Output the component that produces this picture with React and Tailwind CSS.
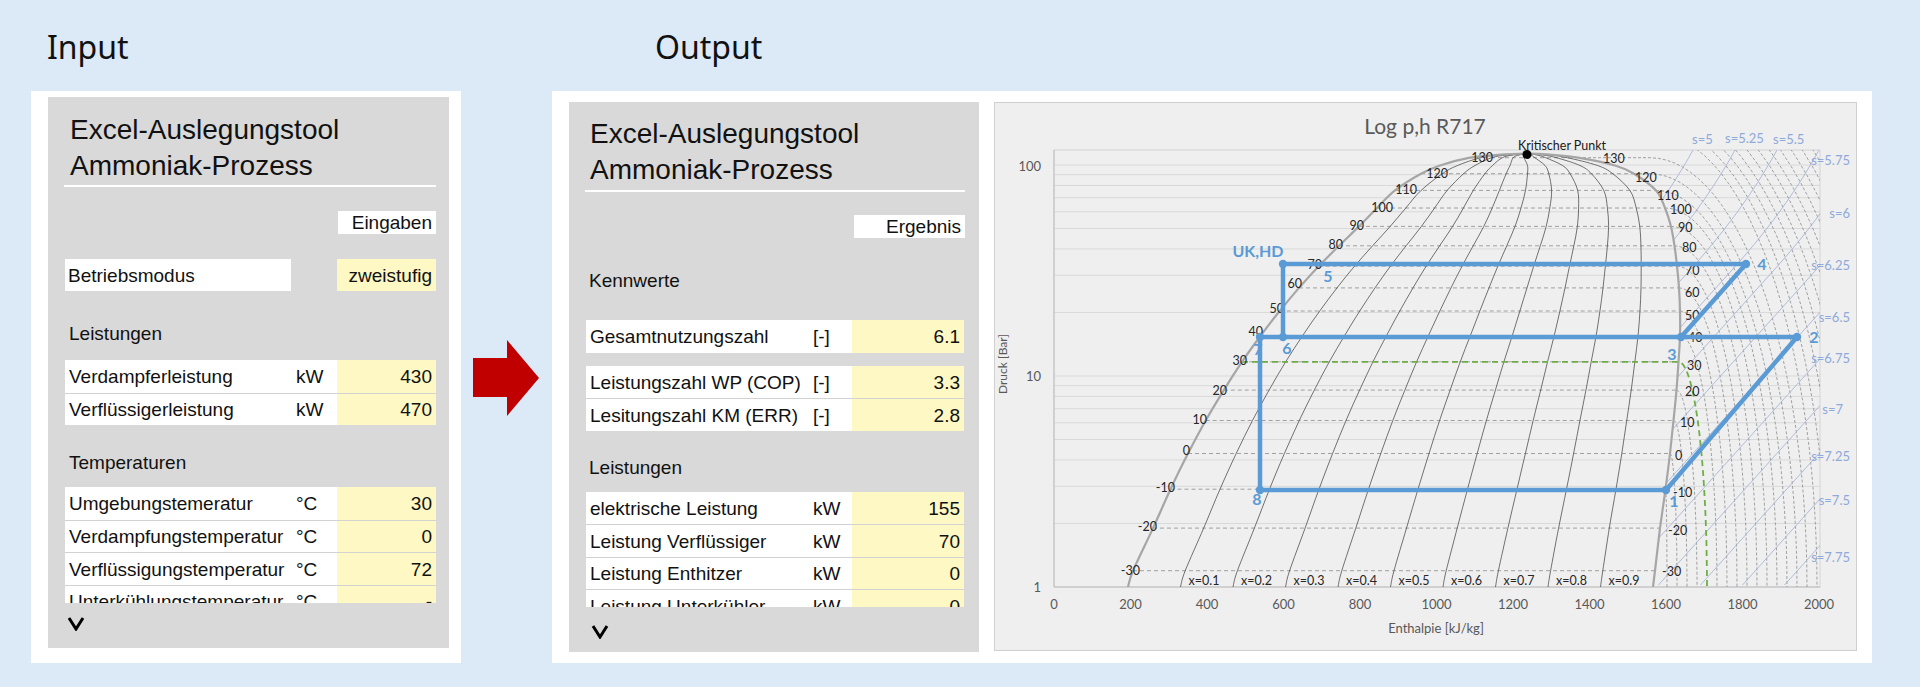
import React from 'react';
import clsx from 'clsx';

// saturation line of R717, already placed in page pixels (y from pressure, x from enthalpy)
const SAT = [
    { T: -33.6, y: 587, xl: 1128, xv: 1653 },
    { T: -30, y: 570.7, xl: 1133, xv: 1655 },
    { T: -20, y: 528.1, xl: 1153, xv: 1660 },
    { T: -10, y: 489.2, xl: 1170.5, xv: 1665.5 },
    { T: 0, y: 453.5, xl: 1188, xv: 1670 },
    { T: 10, y: 420.5, xl: 1205.7, xv: 1673.5 },
    { T: 20, y: 390.1, xl: 1223.8, xv: 1676.5 },
    { T: 30, y: 361.8, xl: 1242, xv: 1678.5 },
    { T: 40, y: 335.5, xl: 1260.8, xv: 1680 },
    { T: 50, y: 311, xl: 1279.7, xv: 1680 },
    { T: 60, y: 287.9, xl: 1299, xv: 1679 },
    { T: 70, y: 266.2, xl: 1318.7, xv: 1677 },
    { T: 80, y: 245.8, xl: 1339, xv: 1674.5 },
    { T: 90, y: 226.4, xl: 1359, xv: 1671 },
    { T: 100, y: 208, xl: 1377, xv: 1665 },
    { T: 110, y: 190.4, xl: 1395, xv: 1656 },
    { T: 120, y: 173.7, xl: 1421, xv: 1634 },
    { T: 125, y: 165.5, xl: 1440, xv: 1615 },
    { T: 130, y: 157.7, xl: 1470, xv: 1578 },
    { T: 131.5, y: 155, xl: 1495, xv: 1555 },
    { T: 132.25, y: 153.6, xl: 1527, xv: 1527 },
];

const LIQ_LABELS = [
    ['-30', 1140, 570], ['-20', 1157, 526], ['-10', 1175, 487], ['0', 1190, 450],
    ['10', 1207, 419], ['20', 1227, 390], ['30', 1247, 360], ['40', 1263, 331],
    ['50', 1284, 308], ['60', 1302, 283], ['70', 1322, 264], ['80', 1343, 244],
    ['90', 1364, 225], ['100', 1393, 207], ['110', 1417, 189], ['120', 1448, 173],
    ['130', 1493, 157],
];

const VAP_LABELS = [
    ['130', 1603, 158], ['120', 1635, 177], ['110', 1657, 195], ['100', 1670, 209],
    ['90', 1678, 227], ['80', 1682, 247], ['70', 1685, 270], ['60', 1685, 292],
    ['50', 1685, 315], ['40', 1688, 337], ['30', 1687, 365], ['20', 1685, 391],
    ['10', 1680, 422], ['0', 1675, 455], ['-10', 1673, 492], ['-20', 1668, 530],
    ['-30', 1662, 571],
];

const S_LABELS = [
    ['s=5', 1692, 139, 'start'], ['s=5.25', 1725, 138, 'start'], ['s=5.5', 1773, 139, 'start'],
    ['s=5.75', 1850, 160, 'end'], ['s=6', 1850, 213, 'end'], ['s=6.25', 1850, 265, 'end'],
    ['s=6.5', 1850, 317, 'end'], ['s=6.75', 1850, 358, 'end'], ['s=7', 1843, 409, 'end'],
    ['s=7.25', 1850, 456, 'end'], ['s=7.5', 1850, 500, 'end'], ['s=7.75', 1850, 557, 'end'],
];

const GRID = [2, 3, 4, 5, 6, 7, 8, 9, 10, 20, 30, 40, 50, 60, 70, 80, 90, 100];
const yOf = (p) => 587 - 211 * Math.log10(p);

function smooth(pts) {
    let d = `M${pts[0][0]},${pts[0][1]}`;
    for (let i = 0; i < pts.length - 1; i++) {
        const p0 = pts[i - 1] || pts[i];
        const p1 = pts[i];
        const p2 = pts[i + 1];
        const p3 = pts[i + 2] || p2;
        const c1x = p1[0] + (p2[0] - p0[0]) / 6;
        const c1y = p1[1] + (p2[1] - p0[1]) / 6;
        const c2x = p2[0] - (p3[0] - p1[0]) / 6;
        const c2y = p2[1] - (p3[1] - p1[1]) / 6;
        d += ` C${c1x.toFixed(1)},${c1y.toFixed(1)} ${c2x.toFixed(1)},${c2y.toFixed(1)} ${p2[0]},${p2[1]}`;
    }
    return d;
}

const line = (pts) => pts.map((p, i) => `${i ? 'L' : 'M'}${p[0].toFixed(1)},${p[1].toFixed(1)}`).join(' ');

const xBottom = (T) => 1707 + (T - 30);

// superheated isotherm as a quarter ellipse ending vertical at the bottom axis
function isotherm(xStart, yTop, cx, a, b) {
    const pts = [];
    if (xStart < cx) pts.push([xStart, yTop]);
    for (let i = 0; i <= 30; i++) {
        const t = (i / 30) * (Math.PI / 2);
        pts.push([cx + a * Math.sin(t), 587 - b * Math.cos(t)]);
    }
    return line(pts);
}

function isentropeX(k, y) {
    const d = y - 150;
    const f = d <= 120 ? -(0.55 * d + (0.35 * d * d) / 240) : -(87 + 0.9 * (d - 120));
    return 1693 + 42 * k + f;
}

function Chart() {
    const dome = smooth([...SAT.map((s) => [s.xl, s.y]), ...SAT.slice(0, -1).reverse().map((s) => [s.xv, s.y])]);
    const qualities = [0.1, 0.2, 0.3, 0.4, 0.5, 0.6, 0.7, 0.8, 0.9];
    const decade = SAT.filter((s) => Number.isInteger(s.T) && s.T % 10 === 0);
    const superRegion = `${line(SAT.map((s) => [s.xv, s.y]))} L1527,150 L1820,150 L1820,587 Z`;
    const font = "Lato, 'Liberation Sans', sans-serif";

    const arcs = [];
    decade.forEach((s) => {
        if (s.T === 30) return;
        const cx = Math.max(s.xv, 1650);
        const a = xBottom(s.T) - cx;
        if (a < 1) return;
        arcs.push(isotherm(s.xv, s.y, cx, a, 587 - s.y));
    });
    for (let T = 140; T <= 260; T += 10) {
        arcs.push(isotherm(1655, 0, 1655, xBottom(T) - 1655, 453 + (T - 140) * 0.95));
    }

    const isentropes = [];
    for (let k = 0; k <= 11; k++) {
        const pts = [];
        for (let y = 150; y <= 587; y += 5) pts.push([isentropeX(k, y), y]);
        isentropes.push(line(pts));
    }

    const green = `M1242,361.8 L1678.5,361.8 ${isotherm(1678.5, 361.8, 1678.5, 28.5, 225.2).replace('M', 'L')}`;

    return (
        <svg width="861" height="547" viewBox="995 103 861 547" className="block">
            <defs>
                <clipPath id="plot">
                    <rect x="1054" y="150" width="766" height="437" />
                </clipPath>
                <clipPath id="superheat">
                    <path d={superRegion} />
                </clipPath>
            </defs>

            <text x="1425" y="134" textAnchor="middle" fontFamily={font} fontSize="21" fill="#595959">Log p,h R717</text>

            {GRID.map((p) => (
                <line key={p} x1="1054" x2="1820" y1={yOf(p)} y2={yOf(p)} stroke="#d9d9d9" strokeWidth="1" />
            ))}
            <rect x="1054" y="150" width="766" height="437" fill="none" stroke="#d4d4d4" strokeWidth="1" />
            <line x1="1054" x2="1054" y1="150" y2="587" stroke="#bfbfbf" />
            <line x1="1054" x2="1820" y1="587" y2="587" stroke="#bfbfbf" />

            <g clipPath="url(#plot)">
                {decade.map((s) => (
                    <line key={s.T} x1={s.xl} x2={s.xv} y1={s.y} y2={s.y} stroke="#8c8c8c" strokeWidth="0.8" strokeDasharray="4 3" />
                ))}
                {qualities.map((q) => (
                    <path key={q} d={smooth(SAT.map((s) => [s.xl + q * (s.xv - s.xl), s.y]))} fill="none" stroke="#3a3a3a" strokeWidth="0.7" />
                ))}
                <g clipPath="url(#superheat)">
                    {arcs.map((d, i) => (
                        <path key={i} d={d} fill="none" stroke="#8c8c8c" strokeWidth="0.8" strokeDasharray="3 2" />
                    ))}
                    {isentropes.map((d, i) => (
                        <path key={i} d={d} fill="none" stroke="#a9b6d4" strokeWidth="0.9" />
                    ))}
                </g>
                <path d={green} fill="none" stroke="#70ad47" strokeWidth="1.8" strokeDasharray="6 4" />
                <path d={dome} fill="none" stroke="#a6a6a6" strokeWidth="2.2" />
            </g>

            <g fontFamily={font} fontSize="12.5" fill="#262626">
                {LIQ_LABELS.map(([t, x, y]) => (
                    <text key={`l${t}`} x={x} y={y + 4.5} textAnchor="end">{t}</text>
                ))}
                {VAP_LABELS.map(([t, x, y]) => (
                    <text key={`v${t}`} x={x} y={y + 4.5}>{t}</text>
                ))}
                {qualities.map((q) => (
                    <text key={q} x={1128 + q * 525 + 8} y="585">x={q}</text>
                ))}
            </g>

            <g fontFamily={font} fontSize="13" fill="#8ea9db">
                {S_LABELS.map(([t, x, y, anchor]) => (
                    <text key={t} x={x} y={y + 4.5} textAnchor={anchor}>{t}</text>
                ))}
            </g>

            <circle cx="1527" cy="154.5" r="4.5" fill="#000" />
            <text x="1562" y="150" textAnchor="middle" fontFamily={font} fontSize="12.5" fill="#1a1a1a">Kritischer Punkt</text>

            <g fontFamily={font} fontSize="16" fontWeight="700" fill="#5b9bd5" textAnchor="middle">
                <text x="1258" y="257">UK,HD</text>
                <text x="1328" y="282">5</text>
                <text x="1287" y="354">6</text>
                <text x="1258" y="355">7</text>
                <text x="1257" y="505">8</text>
                <text x="1674" y="507">1</text>
                <text x="1814" y="343">2</text>
                <text x="1672" y="360">3</text>
                <text x="1762" y="270">4</text>
            </g>
            <g stroke="#5b9bd5" strokeWidth="4.5" strokeLinecap="round" fill="none">
                <path d="M1283,264 L1746,264 M1283,264 L1283,337 M1260,337 L1797,337 M1260,337 L1260,490 M1260,490 L1666,490 M1666,490 L1797,337 M1681,337 L1746,264" />
            </g>
            <g fill="#5b9bd5">
                {[[1283, 264], [1746, 264], [1283, 337], [1260, 337], [1681, 337], [1797, 337], [1260, 490], [1666, 490]].map(([x, y]) => (
                    <circle key={`${x}-${y}`} cx={x} cy={y} r="4.2" />
                ))}
            </g>

            <g fontFamily={font} fontSize="13" fill="#595959">
                <text x="1041" y="170.5" textAnchor="end">100</text>
                <text x="1041" y="380.5" textAnchor="end">10</text>
                <text x="1041" y="591.5" textAnchor="end">1</text>
                {[0, 200, 400, 600, 800, 1000, 1200, 1400, 1600, 1800, 2000].map((h) => (
                    <text key={h} x={1054 + 0.3825 * h} y="609" textAnchor="middle">{h}</text>
                ))}
                <text x="1436" y="633" textAnchor="middle">Enthalpie [kJ/kg]</text>
                <text x="1011" y="368" textAnchor="middle" fontSize="12" transform="rotate(-90 1007 368)">Druck [Bar]</text>
            </g>
        </svg>
    );
}

function DataTable({ rows, labelW, unitW, valueW }) {
    return (
        <div className="flex flex-col">
            {rows.map(([label, unit, value], index) => (
                <div key={label} className={clsx('flex h-[32.5px] shrink-0', index > 0 && 'border-t border-[#d2d2d2]')}>
                    <div className={clsx('flex items-center bg-white pl-[4px] pt-[2px] whitespace-nowrap', labelW)}>{label}</div>
                    <div className={clsx('flex items-center bg-white pt-[2px]', unitW)}>{unit}</div>
                    <div className={clsx('flex items-center justify-end bg-[#fdf8c4] pr-[4px] pt-[2px]', valueW)}>{value}</div>
                </div>
            ))}
        </div>
    );
}

function Chevron() {
    return (
        <svg width="18" height="15" viewBox="0 0 18 15">
            <polyline points="2,2 9,13 16,2" fill="none" stroke="#000" strokeWidth="3" />
        </svg>
    );
}

function InputPanel() {
    return (
        <div className="flex h-[551px] w-[401px] flex-col bg-[#d9d9d9] text-[19px] text-[#111] font-['Liberation_Sans',Arial,sans-serif]">
            <div className="ml-[16px] flex h-[506px] w-[372px] flex-col overflow-hidden">
                <div className="mt-[15px] pl-[6px] text-[28px] leading-[36px]">
                    <div>Excel-Auslegungstool</div>
                    <div>Ammoniak-Prozess</div>
                </div>
                <div className="mt-[1px] h-[2px] shrink-0 bg-white" />
                <div className="mt-[24px] flex h-[23px] w-[98px] shrink-0 items-center justify-end self-end bg-white pr-[4px] pt-[1px]">Eingaben</div>
                <div className="ml-[1px] mt-[25px] flex h-[32px] shrink-0 justify-between">
                    <div className="flex w-[226px] items-center bg-white pl-[3px] pt-[2px]">Betriebsmodus</div>
                    <div className="flex w-[99px] items-center justify-end bg-[#fdf8c4] pr-[4px] pt-[2px]">zweistufig</div>
                </div>
                <div className="mt-[26px] flex h-[32px] shrink-0 items-center pl-[5px] pt-[2px]">Leistungen</div>
                <div className="ml-[1px] mt-[11px]">
                    <DataTable
                        rows={[['Verdampferleistung', 'kW', '430'], ['Verflüssigerleistung', 'kW', '470']]}
                        labelW="w-[231px]"
                        unitW="w-[41px]"
                        valueW="w-[99px]"
                    />
                </div>
                <div className="mt-[21px] flex h-[32px] shrink-0 items-center pl-[5px] pt-[2px]">Temperaturen</div>
                <div className="ml-[1px] mt-[9px]">
                    <DataTable
                        rows={[
                            ['Umgebungstemeratur', '°C', '30'],
                            ['Verdampfungstemperatur', '°C', '0'],
                            ['Verflüssigungstemperatur', '°C', '72'],
                            ['Unterkühlungstemperatur', '°C', '-'],
                            ['Überhitzungstemperatur', 'K', '5'],
                        ]}
                        labelW="w-[231px]"
                        unitW="w-[41px]"
                        valueW="w-[99px]"
                    />
                </div>
            </div>
            <div className="mt-[13px] pl-[19px]">
                <Chevron />
            </div>
        </div>
    );
}

function OutputPanel() {
    return (
        <div className="flex h-[550px] w-[410px] shrink-0 flex-col bg-[#d9d9d9] text-[19px] text-[#111] font-['Liberation_Sans',Arial,sans-serif]">
            <div className="ml-[16px] flex h-[505px] w-[380px] flex-col overflow-hidden">
                <div className="mt-[14px] pl-[5px] text-[28px] leading-[36px]">
                    <div>Excel-Auslegungstool</div>
                    <div>Ammoniak-Prozess</div>
                </div>
                <div className="mt-[2px] h-[2px] shrink-0 bg-white" />
                <div className="mt-[23px] flex h-[23px] w-[111px] shrink-0 items-center justify-end self-end bg-white pr-[4px] pt-[1px]">Ergebnis</div>
                <div className="mt-[26px] flex h-[32px] shrink-0 items-center pl-[4px] pt-[2px]">Kennwerte</div>
                <div className="ml-[1px] mt-[24px]">
                    <DataTable rows={[['Gesamtnutzungszahl', '[-]', '6.1']]} labelW="w-[227px]" unitW="w-[39px]" valueW="w-[112px]" />
                </div>
                <div className="ml-[1px] mt-[13px]">
                    <DataTable
                        rows={[['Leistungszahl WP (COP)', '[-]', '3.3'], ['Lesitungszahl KM (ERR)', '[-]', '2.8']]}
                        labelW="w-[227px]"
                        unitW="w-[39px]"
                        valueW="w-[112px]"
                    />
                </div>
                <div className="mt-[21px] flex h-[32px] shrink-0 items-center pl-[4px] pt-[2px]">Leistungen</div>
                <div className="ml-[1px] mt-[8px]">
                    <DataTable
                        rows={[
                            ['elektrische Leistung', 'kW', '155'],
                            ['Leistung Verflüssiger', 'kW', '70'],
                            ['Leistung Enthitzer', 'kW', '0'],
                            ['Leistung Unterkühler', 'kW', '0'],
                            ['Leistung Verdampfer', 'kW', '430'],
                        ]}
                        labelW="w-[227px]"
                        unitW="w-[39px]"
                        valueW="w-[112px]"
                    />
                </div>
            </div>
            <div className="mt-[17px] pl-[22px]">
                <Chevron />
            </div>
        </div>
    );
}

export default function App() {
    return (
        <div className="flex h-[687px] w-[1920px] items-start overflow-hidden bg-[#dce9f6] pt-[27px]">
            <div className="ml-[31px] flex w-[430px] shrink-0 flex-col">
                <div className="h-[40px] pl-[16px] text-[32px] leading-[40px] text-[#111] font-['Noto_Sans',sans-serif]">Input</div>
                <div className="mt-[24px] h-[572px] bg-white pl-[17px] pt-[6px]">
                    <InputPanel />
                </div>
            </div>

            <div className="ml-[12px] mt-[313px] h-[76px] w-[66px] shrink-0">
                <svg width="66" height="76" viewBox="0 0 66 76">
                    <polygon points="0,18 34,18 34,0 66,38 34,76 34,57 0,57" fill="#c00000" />
                </svg>
            </div>

            <div className="ml-[13px] flex w-[1320px] shrink-0 flex-col">
                <div className="h-[40px] pl-[103px] text-[32px] leading-[40px] text-[#111] font-['Noto_Sans',sans-serif]">Output</div>
                <div className="mt-[24px] flex h-[572px] items-start gap-[15px] bg-white pl-[17px] pt-[11px]">
                    <OutputPanel />
                    <div className="h-[549px] w-[863px] shrink-0 border border-[#d0d0d0] bg-[#efefef]">
                        <Chart />
                    </div>
                </div>
            </div>
        </div>
    );
}
